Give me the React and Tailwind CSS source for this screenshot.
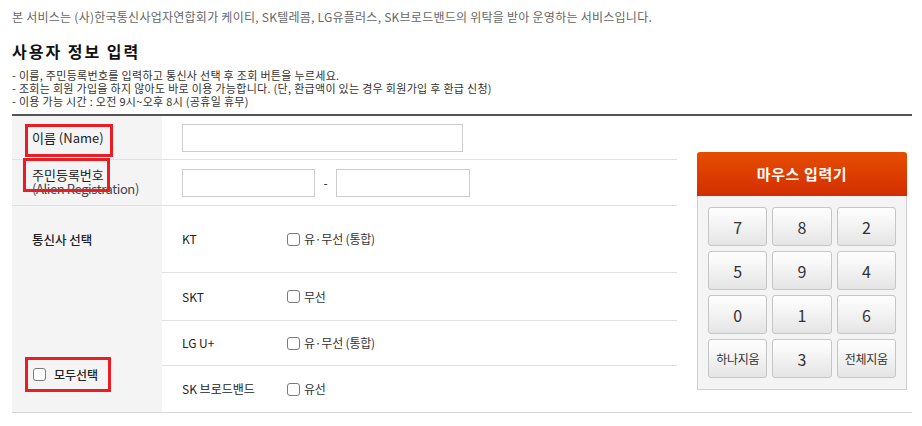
const font = { fontFamily: '"Noto Sans CJK KR", "Noto Sans", sans-serif' }

function Box() {
  return <span className="inline-block w-[13px] h-[13px] border border-[#7a7a7a] rounded-[3px] bg-white shrink-0" />
}

function Key({ label, small }) {
  return (
    <div className={`h-[39px] flex items-center justify-center rounded-[3px] border border-[#c6c6c6] bg-linear-to-b from-white to-[#e5e5e5] text-[#333] ${small ? 'text-[12px] tracking-[-0.3px]' : 'text-[16px]'}`}>
      {label}
    </div>
  )
}

const carriers = [
  { name: 'KT', opt: '유·무선 (통합)', h: 'h-[67px]' },
  { name: 'SKT', opt: '무선', h: 'h-[48px]' },
  { name: 'LG U+', opt: '유·무선 (통합)', h: 'h-[45px]' },
  { name: 'SK 브로드밴드', opt: '유선', h: 'h-[46px]' },
]

const keys = ['7', '8', '2', '5', '9', '4', '0', '1', '6', '하나지움', '3', '전체지움']

export default function App() {
  return (
    <div className="bg-white w-[922px] h-[426px] overflow-hidden text-[#222]" style={font}>
      <div className="pl-[12px] pt-[9px]">
        <p className="text-[12px] leading-[16px] text-[#666] tracking-[0.25px]">
          본 서비스는 (사)한국통신사업자연합회가 케이티, SK텔레콤, LG유플러스, SK브로드밴드의 위탁을 받아 운영하는 서비스입니다.
        </p>
        <h2 className="mt-[16px] text-[16px] leading-[20px] font-bold text-[#111] tracking-[2px]">사용자 정보 입력</h2>
        <div className="mt-[8px] text-[11px] leading-[13px] text-[#333] tracking-[0.3px]">
          <p>- 이름, 주민등록번호를 입력하고 통신사 선택 후 조회 버튼을 누르세요.</p>
          <p>- 조회는 회원 가입을 하지 않아도 바로 이용 가능합니다. (단, 환급액이 있는 경우 회원가입 후 환급 신청)</p>
          <p>- 이용 가능 시간 : 오전 9시~오후 8시 (공휴일 휴무)</p>
        </div>

        <div className="mt-[6px] w-[900px] flex border-t-2 border-[#555] border-b border-b-[#d6d6d6]">
          {/* form table */}
          <div className="w-[665px] text-[13px]">
            <div className="flex border-b border-[#e1e1e1]">
              <div className="w-[150px] h-[43px] bg-[#f4f4f4] relative">
                <span className="absolute left-[20px] top-[13px] leading-[18px]">이름 (Name)</span>
                <span className="absolute left-[13px] top-[8px] w-[88px] h-[33px] border-[3px] border-[#ea1c24]" />
              </div>
              <div className="flex-1 pl-[20px] flex items-center">
                <div className="w-[281px] h-[28px] border border-[#ccc] bg-white" />
              </div>
            </div>

            <div className="flex border-b border-[#e1e1e1]">
              <div className="w-[150px] h-[45px] bg-[#f4f4f4] relative">
                <div className="absolute left-[20px] top-[8px] leading-[14px]">
                  <p>주민등록번호</p>
                  <p className="text-[#444] tracking-[-0.4px]">(Alien Registration)</p>
                </div>
                <span className="absolute left-[11px] top-[-2px] w-[87px] h-[34px] border-[3px] border-[#ea1c24]" />
              </div>
              <div className="flex-1 pl-[20px] flex items-center">
                <div className="w-[133px] h-[28px] border border-[#ccc] bg-white" />
                <span className="w-[21px] text-center text-[12px]">-</span>
                <div className="w-[134px] h-[28px] border border-[#ccc] bg-white" />
              </div>
            </div>

            <div className="flex">
              <div className="w-[150px] bg-[#f4f4f4] relative">
                <span className="absolute left-[20px] top-[25px] text-[12.5px] font-medium">통신사 선택</span>
                <div className="absolute left-[13px] top-[151px] w-[86px] h-[35px] border-[3px] border-[#ea1c24] flex items-center pl-[5px] gap-[8px]">
                  <Box />
                  <span className="font-medium text-[12px]">모두선택</span>
                </div>
              </div>
              <div className="flex-1 text-[12px]">
                {carriers.map((c, i) => (
                  <div key={c.name} className={`${c.h} flex items-center pl-[20px] ${i < 3 ? 'border-b border-[#e1e1e1]' : ''}`}>
                    <span className="w-[105px]">{c.name}</span>
                    <Box />
                    <span className="ml-[4px] text-[#333] tracking-[-0.2px]">{c.opt}</span>
                  </div>
                ))}
              </div>
            </div>
          </div>

          {/* mouse keypad */}
          <div className="pl-[20px] pt-[36px]">
            <div className="w-[210px]">
              <div className="h-[44px] rounded-t-[3px] bg-linear-to-b from-[#e64d00] to-[#d22d00] flex items-center justify-center text-white text-[15px] font-bold tracking-[0.6px]">
                마우스 입력기
              </div>
              <div className="bg-[#f4f4f4] border border-t-0 border-[#cfcfcf] px-[10px] pt-[11px] pb-[11px] grid grid-cols-3 gap-x-[5px] gap-y-[5px]">
                {keys.map(k => (
                  <Key key={k} label={k} small={k.length > 1} />
                ))}
              </div>
            </div>
          </div>
        </div>
      </div>
    </div>
  )
}
